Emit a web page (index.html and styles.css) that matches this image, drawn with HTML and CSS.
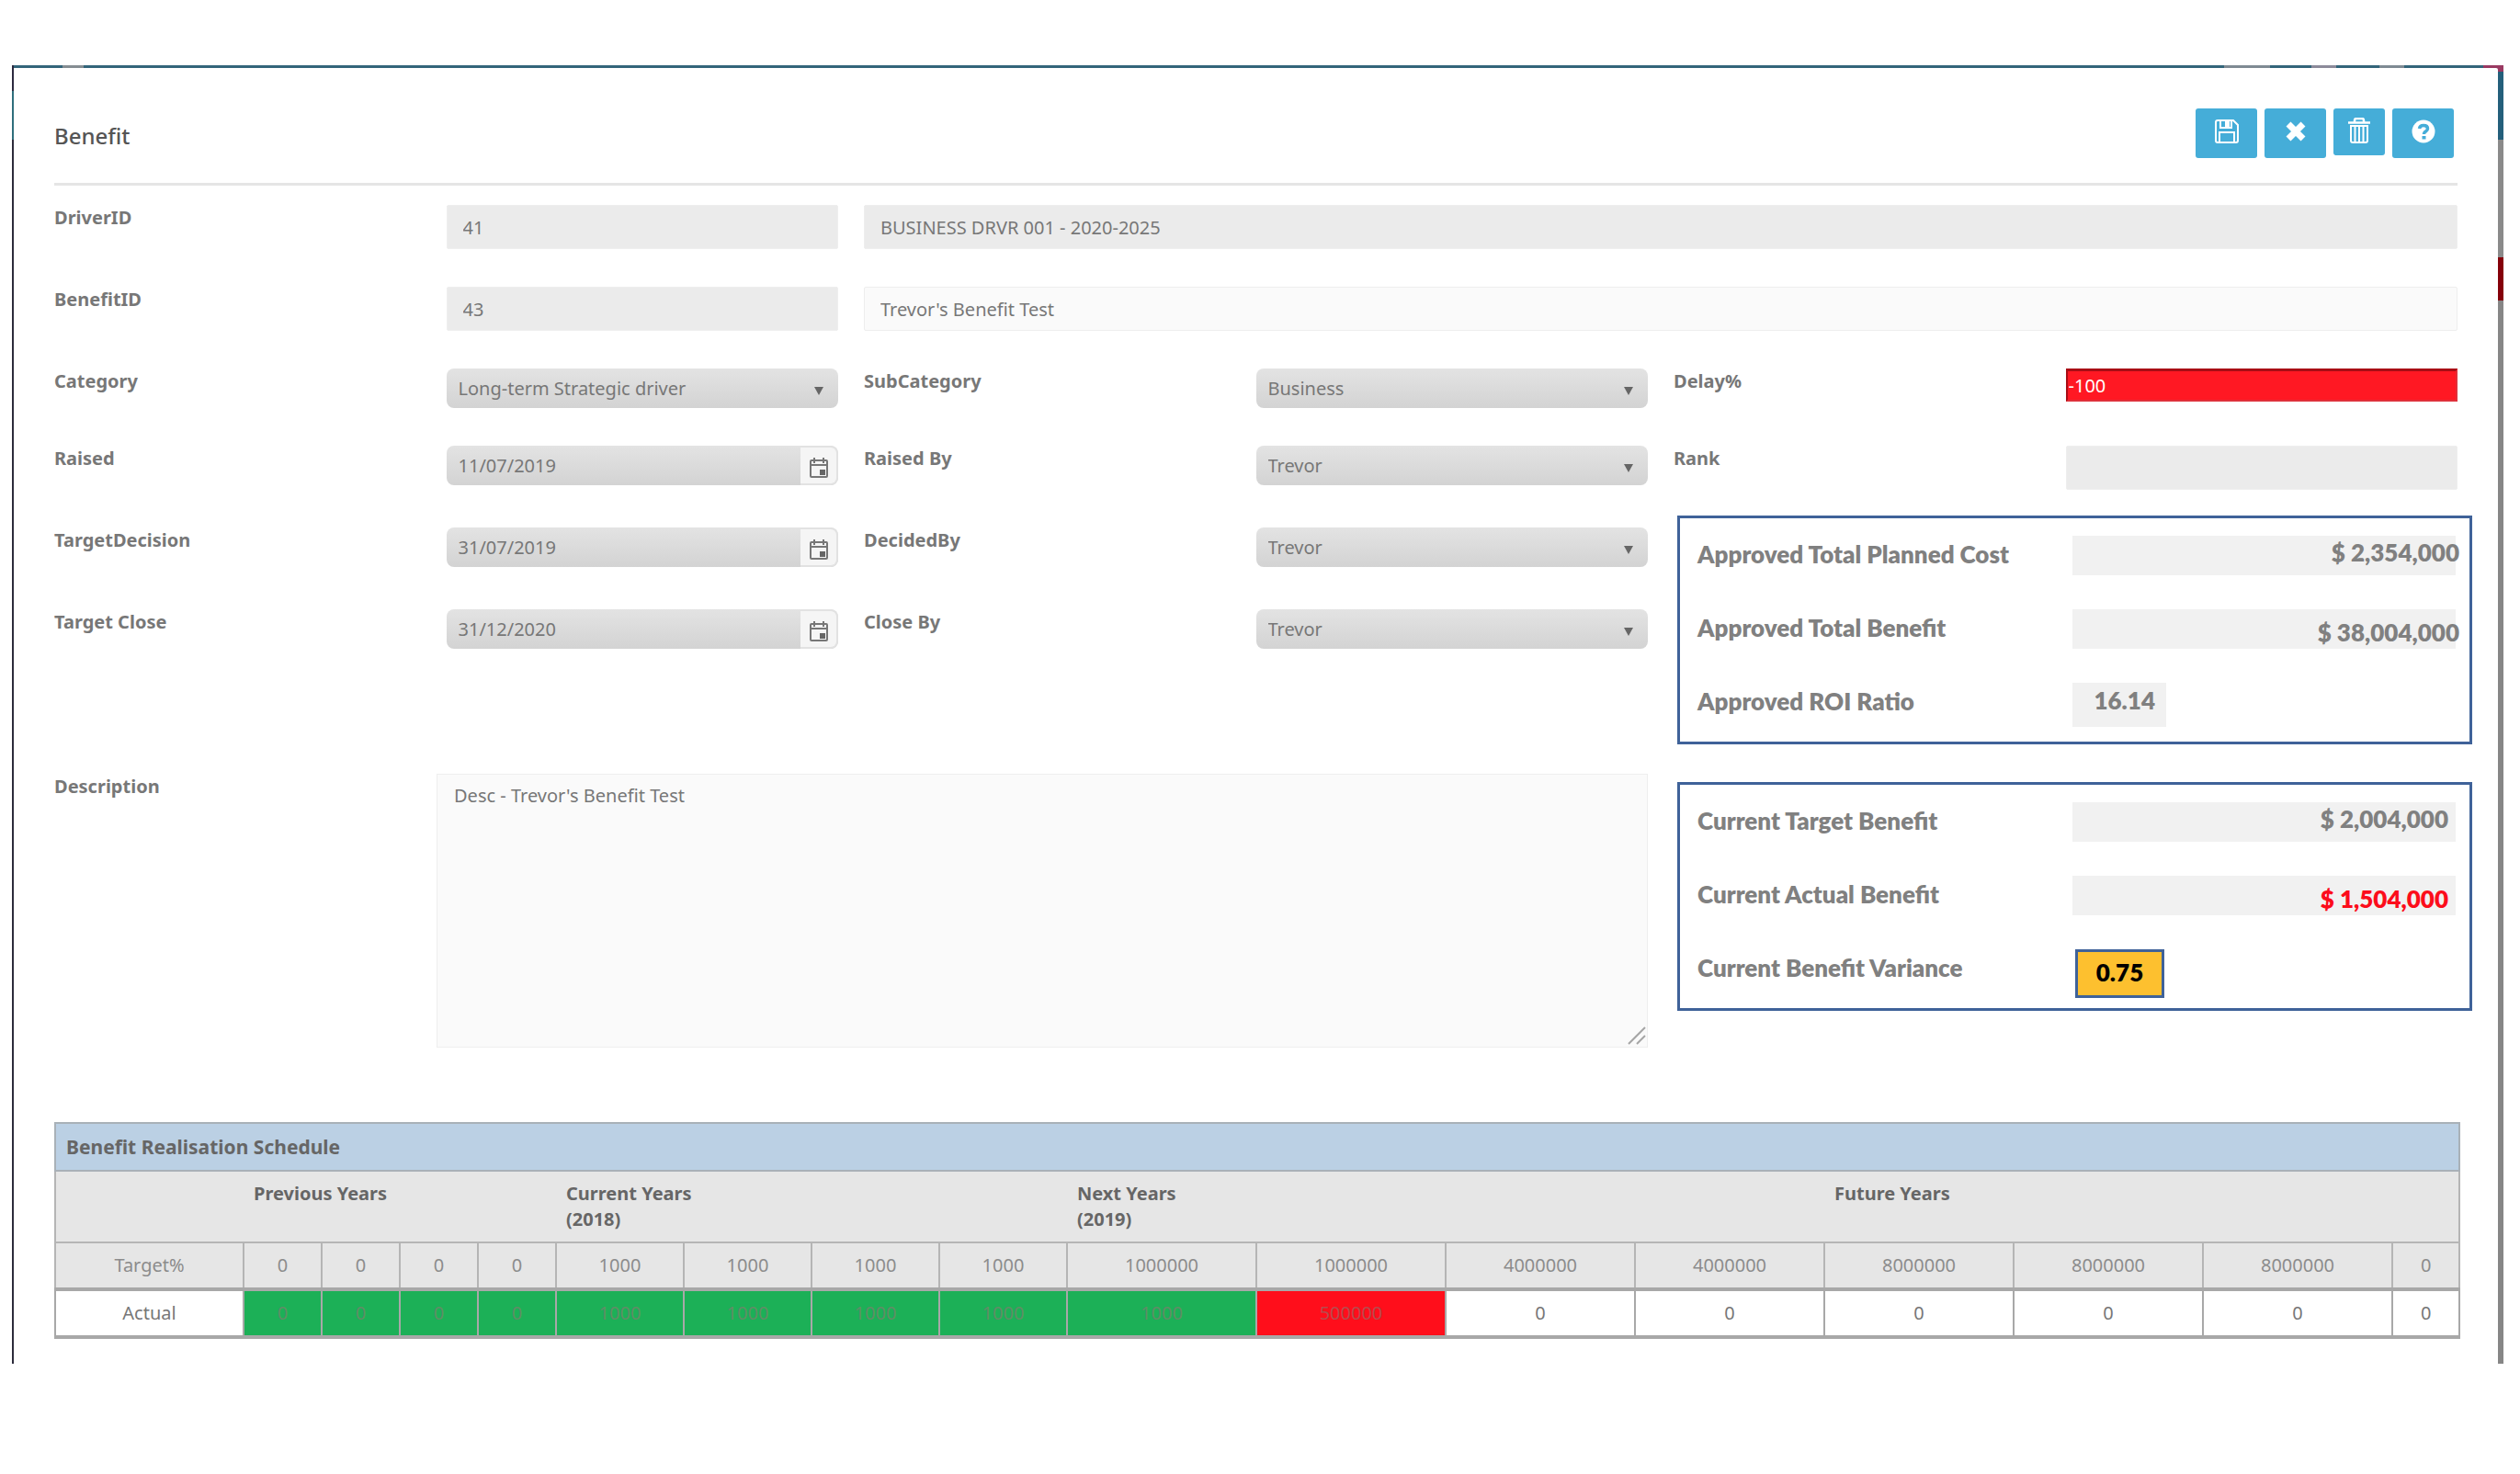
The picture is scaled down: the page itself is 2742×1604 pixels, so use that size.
FILE: index.html
```html
<!DOCTYPE html>
<html lang="en">

<head>
    <meta charset="UTF-8">
    <meta name="viewport" content="width=device-width, initial-scale=1.0">
    <title>Benefit</title>
    <link rel="stylesheet" href="styles.css">
</head>

<body>
    <div class="backdrop">
        <form class="modal">
            <div class="header">
                <h1>Benefit</h1>
                <div class="actions">
                    <button type="button" aria-label="Save">
                        <svg width="26" height="26" viewBox="0 0 26 26" fill="none" stroke="#fff" stroke-width="2">
                            <path d="M1 3Q1 1 3 1H20L25 6V23Q25 25 23 25H3Q1 25 1 23Z"/>
                            <path d="M5 25V14H21V25M6 1V9H18V1"/>
                            <rect x="12" y="2" width="3" height="5" fill="#fff"/>
                        </svg>
                    </button>
                    <button type="button" aria-label="Close">
                        <svg width="22" height="22" viewBox="0 0 22 22" fill="none" stroke="#fff" stroke-width="7">
                            <path d="M3 3L19 19M19 3L3 19"/>
                        </svg>
                    </button>
                    <button type="button" class="narrow" aria-label="Delete">
                        <svg width="24" height="28" viewBox="0 0 24 28" fill="none" stroke="#fff" stroke-width="2">
                            <path d="M0 5.500H24" stroke-width="2.500"/>
                            <path d="M7 5V3Q7 1 9 1H15Q17 1 17 3V5" stroke-width="2.500"/>
                            <path d="M3 9H21V25Q21 27 19 27H5Q3 27 3 25Z"/>
                            <path d="M7.500 10V26M12 10V26M16.500 10V26"/>
                        </svg>
                    </button>
                    <button type="button" aria-label="Help">
                        <svg width="26" height="26" viewBox="0 0 26 26" fill="none" stroke="#45add8">
                            <circle cx="13" cy="13" r="12.500" fill="#fff" stroke="none"/>
                            <path d="M8.500 10Q9 6.500 13 6.500Q17.500 6.500 17.500 10Q17.500 11.500 15.500 13Q13.500 14 13.500 16" stroke-width="3.500"/>
                            <path d="M13.500 18V21.500" stroke-width="4"/>
                        </svg>
                    </button>
                </div>
            </div>

            <div class="row">
                <div class="field">
                    <label for="driverId">DriverID</label>
                    <input class="text grey" id="driverId" value="41" readonly>
                </div>
                <input class="text grey wide" aria-label="Driver name" value="BUSINESS DRVR 001 - 2020-2025" readonly>
            </div>
            <div class="row">
                <div class="field">
                    <label for="benefitId">BenefitID</label>
                    <input class="text grey" id="benefitId" value="43" readonly>
                </div>
                <input class="text wide" aria-label="Benefit name" value="Trevor's Benefit Test">
            </div>

            <div class="main">
                <div class="left">
                    <div class="pair first">
                        <div class="field">
                            <label for="category">Category</label>
                            <div class="select"><select id="category"><option>Long-term Strategic driver</option></select></div>
                        </div>
                        <div class="field">
                            <label for="subCategory">SubCategory</label>
                            <div class="select"><select id="subCategory"><option>Business</option></select></div>
                        </div>
                    </div>
                    <div class="pair">
                        <div class="field">
                            <label for="raised">Raised</label>
                            <div class="date">
                                <input id="raised" value="11/07/2019">
                                <button type="button" aria-label="Pick raised date"><svg width="22" height="24" viewBox="0 0 22 24"><use href="#calendar"/></svg></button>
                            </div>
                        </div>
                        <div class="field">
                            <label for="raisedBy">Raised By</label>
                            <div class="select"><select id="raisedBy"><option>Trevor</option></select></div>
                        </div>
                    </div>
                    <div class="pair">
                        <div class="field">
                            <label for="targetDecision">TargetDecision</label>
                            <div class="date">
                                <input id="targetDecision" value="31/07/2019">
                                <button type="button" aria-label="Pick decision date"><svg width="22" height="24" viewBox="0 0 22 24"><use href="#calendar"/></svg></button>
                            </div>
                        </div>
                        <div class="field">
                            <label for="decidedBy">DecidedBy</label>
                            <div class="select"><select id="decidedBy"><option>Trevor</option></select></div>
                        </div>
                    </div>
                    <div class="pair last">
                        <div class="field">
                            <label for="targetClose">Target Close</label>
                            <div class="date">
                                <input id="targetClose" value="31/12/2020">
                                <button type="button" aria-label="Pick close date"><svg width="22" height="24" viewBox="0 0 22 24"><use href="#calendar"/></svg></button>
                            </div>
                        </div>
                        <div class="field">
                            <label for="closeBy">Close By</label>
                            <div class="select"><select id="closeBy"><option>Trevor</option></select></div>
                        </div>
                    </div>
                    <div class="description">
                        <label for="description">Description</label>
                        <div class="area">
                            <textarea id="description">Desc - Trevor's Benefit Test</textarea>
                            <svg class="grip" width="20" height="20" viewBox="0 0 20 20" fill="none" stroke="#a5a5a5" stroke-width="2"><path d="M1 19L19 1M10 19L19 10"/></svg>
                        </div>
                    </div>
                </div>

                <div class="right">
                    <div class="field first">
                        <label for="delay">Delay%</label>
                        <input class="delay" id="delay" value="-100">
                    </div>
                    <div class="field rank">
                        <label for="rank">Rank</label>
                        <input class="text grey" id="rank" readonly>
                    </div>
                    <div class="totals approved">
                        <label for="plannedCost">Approved Total Planned Cost</label>
                        <output class="amount upper" id="plannedCost"><span>$ 2,354,000</span></output>
                        <label for="totalBenefit">Approved Total Benefit</label>
                        <output class="amount lower" id="totalBenefit"><span>$ 38,004,000</span></output>
                        <label for="roi">Approved ROI Ratio</label>
                        <output class="amount ratio" id="roi">16.14</output>
                    </div>
                    <div class="totals current">
                        <label for="targetBenefit">Current Target Benefit</label>
                        <output class="amount upper" id="targetBenefit">$ 2,004,000</output>
                        <label for="actualBenefit">Current Actual Benefit</label>
                        <output class="amount lower under" id="actualBenefit">$ 1,504,000</output>
                        <label for="variance">Current Benefit Variance</label>
                        <output class="variance" id="variance">0.75</output>
                    </div>
                </div>
            </div>

            <table class="schedule">
                <colgroup>
                    <col class="name">
                    <col span="4" class="previous">
                    <col span="4" class="year">
                    <col span="7" class="future">
                    <col class="end">
                </colgroup>
                <thead>
                    <tr class="title">
                        <th colspan="17">Benefit Realisation Schedule</th>
                    </tr>
                    <tr class="years">
                        <th></th>
                        <th colspan="4">Previous Years</th>
                        <th colspan="4">Current Years<br>(2018)</th>
                        <th colspan="4">Next Years<br>(2019)</th>
                        <th colspan="4">Future Years</th>
                    </tr>
                </thead>
                <tbody>
                    <tr class="target">
                        <td>Target%</td>
                        <td>0</td>
                        <td>0</td>
                        <td>0</td>
                        <td>0</td>
                        <td>1000</td>
                        <td>1000</td>
                        <td>1000</td>
                        <td>1000</td>
                        <td>1000000</td>
                        <td>1000000</td>
                        <td>4000000</td>
                        <td>4000000</td>
                        <td>8000000</td>
                        <td>8000000</td>
                        <td>8000000</td>
                        <td>0</td>
                    </tr>
                    <tr class="actual">
                        <td>Actual</td>
                        <td class="met">0</td>
                        <td class="met">0</td>
                        <td class="met">0</td>
                        <td class="met">0</td>
                        <td class="met">1000</td>
                        <td class="met">1000</td>
                        <td class="met">1000</td>
                        <td class="met">1000</td>
                        <td class="met">1000</td>
                        <td class="missed">500000</td>
                        <td>0</td>
                        <td>0</td>
                        <td>0</td>
                        <td>0</td>
                        <td>0</td>
                        <td>0</td>
                    </tr>
                </tbody>
            </table>
        </form>
    </div>

    <svg class="symbols" width="0" height="0">
        <symbol id="calendar" viewBox="0 0 22 24">
            <rect x="2" y="4" width="18" height="18" rx="1" fill="none" stroke="#777" stroke-width="2"/>
            <path d="M2 9H20M6 1V7M16 1V7" stroke="#777" stroke-width="2"/>
            <rect x="12" y="14" width="6" height="6" fill="#666"/>
        </symbol>
    </svg>
</body>

</html>
```
FILE: styles.css
```css
* {
    box-sizing: border-box;
}

body {
    margin: 0;
    padding: 71px 18px 40px 13px;
    background-color: #fff;
    color: #777;
    font-family: 'Noto Sans', sans-serif;
    font-size: 20px;
    line-height: 28px;
}

input, select, textarea, button {
    font: inherit;
    color: inherit;
    margin: 0;
}

/* the page behind the dialog, only its edges can be seen */
.backdrop {
    padding: 3px 6px 0 2px;
    background:
        linear-gradient(#7f8a93, #7f8a93) right 254px top / 50px 3px no-repeat,
        linear-gradient(#8c8a9a, #8c8a9a) right 182px top / 27px 3px no-repeat,
        linear-gradient(#7f8a93, #7f8a93) right 108px top / 27px 3px no-repeat,
        linear-gradient(#9a3a62, #9a3a62) right top / 22px 7px no-repeat,
        linear-gradient(#858d92, #858d92) 55px 0 / 23px 3px no-repeat,
        linear-gradient(#33657a, #33657a) 2px 0 / 100% 3px no-repeat,
        linear-gradient(#245f7b 81px, #8a8a8a 81px, #8a8a8a 209px, #85000a 209px, #85000a 256px, #868686 256px) right top / 6px 100% no-repeat,
        linear-gradient(#2c2a40 28px, #2f6e7c 28px, #2f6e7c 81px, #2c2b3b 81px) left top / 2px 100% no-repeat;
}

.modal {
    padding: 0 44px 27px;
    background-color: #fff;
    border-radius: 2px;
}

.header {
    display: flex;
    justify-content: space-between;
    align-items: flex-start;
    height: 128px;
    padding: 44px 4px 0 0;
    margin-bottom: 21px;
    border-bottom: 3px solid #e5e5e5;
}

h1 {
    margin: 14px 0 0;
    color: #555;
    font-size: 24px;
    font-weight: 500;
    line-height: 32px;
}

.actions {
    display: flex;
    align-items: flex-start;
    gap: 8px;
}

.actions button {
    display: flex;
    justify-content: center;
    align-items: center;
    width: 67px;
    height: 54px;
    padding: 0 0 4px;
    background-color: #45add8;
    border: none;
    border-radius: 3px;
    cursor: pointer;
}

.actions .narrow {
    width: 56px;
    height: 51px;
}

label {
    font-weight: 700;
}

.row {
    display: grid;
    grid-template-columns: repeat(3, 1fr);
    column-gap: 28px;
    min-height: 89px;
    align-items: start;
}

.wide {
    grid-column: span 2;
}

.field {
    display: grid;
    grid-template-columns: 1fr 1fr;
    align-items: start;
}

.text {
    width: 100%;
    height: 48px;
    padding: 0 17px;
    background-color: #fafafa;
    border: 1px solid #eee;
    border-radius: 2px;
}

.grey {
    background-color: #ebebeb;
}

.main {
    display: grid;
    grid-template-columns: repeat(3, 1fr);
    column-gap: 28px;
    margin-bottom: 81px;
}

.left {
    grid-column: span 2;
}

.pair {
    display: grid;
    grid-template-columns: 1fr 1fr;
    column-gap: 28px;
    min-height: 89px;
    align-items: start;
}

.pair.first, .right .first {
    min-height: 84px;
}

.pair.last {
    min-height: 179px;
}

.select {
    position: relative;
}

.select select {
    display: block;
    width: 100%;
    height: 43px;
    padding: 0 40px 0 13px;
    appearance: none;
    background: linear-gradient(#e3e3e3, #d3d3d3);
    border: none;
    border-radius: 8px;
}

.select::after {
    content: "";
    position: absolute;
    right: 16px;
    top: 20px;
    border: 5px solid transparent;
    border-top: 9px solid #666;
    border-bottom: none;
    pointer-events: none;
}

.date {
    display: flex;
    height: 43px;
    background: linear-gradient(#e3e3e3, #d3d3d3);
    border-radius: 8px;
    overflow: hidden;
}

.date input {
    flex: 1;
    min-width: 0;
    padding: 0 13px;
    background: none;
    border: none;
}

.date button {
    display: flex;
    justify-content: center;
    align-items: center;
    width: 41px;
    padding: 4px 0 0;
    background-color: #f5f5f5;
    border: 2px solid #e2e2e2;
    border-left: none;
    border-radius: 0 8px 8px 0;
}

.description {
    display: grid;
    grid-template-columns: 416px 1fr;
    align-items: start;
}

.area {
    position: relative;
}

textarea {
    display: block;
    width: 100%;
    height: 298px;
    padding: 9px 18px;
    background-color: #fafafa;
    border: 1px solid #eee;
    resize: none;
}

.grip {
    position: absolute;
    right: 2px;
    bottom: 3px;
}

.delay {
    width: 100%;
    height: 36px;
    padding: 0 1px;
    background-color: #ff1823;
    border: 2px solid #e0303a;
    border-top: 3px solid #a80d15;
    border-left-color: #a80d15;
    color: #fff;
}

.rank {
    min-height: 76px;
}

.totals {
    display: grid;
    grid-template-columns: 408px 1fr;
    row-gap: 37px;
    align-items: start;
    align-content: start;
    min-height: 249px;
    margin: 0 -16px 41px 4px;
    padding: 19px 15px 0 19px;
    border: 3px solid #3f6299;
    color: #808080;
    font-family: Lato, sans-serif;
    font-size: 26px;
    font-weight: 800;
    line-height: 32px;
}

.current {
    margin-bottom: 0;
}

.totals label {
    padding-top: 4px;
    font-weight: inherit;
}

.amount {
    height: 43px;
    background-color: #f1f1f1;
    text-align: right;
}

.upper {
    padding-top: 2px;
}

.lower {
    padding-top: 9px;
}

.approved span {
    margin-right: -4px;
}

.current .amount {
    padding-right: 8px;
}

.ratio {
    width: 102px;
    height: 48px;
    padding: 3px 12px 0;
}

.under {
    color: #fc0d1b;
}

.variance {
    width: 97px;
    height: 53px;
    margin-left: 3px;
    padding-top: 6px;
    background-color: #fdc02f;
    border: 3px solid #3f6299;
    color: #000;
    text-align: center;
}

.schedule {
    width: 100%;
    table-layout: fixed;
    border-collapse: collapse;
}

.name {
    width: 205px;
}

.previous {
    width: 85px;
}

.year {
    width: 139px;
}

.future {
    width: 206px;
}

.end {
    width: 73px;
}

th {
    padding: 0 11px;
    color: #666;
    text-align: left;
    vertical-align: top;
}

.title th {
    height: 52px;
    background-color: #bbd0e4;
    border: 2px solid #a9b1b8;
    font-size: 21px;
    vertical-align: middle;
}

.years {
    background-color: #e6e6e6;
    border: 2px solid #b5b5b5;
}

.years th {
    height: 78px;
    padding-top: 10px;
}

td {
    padding: 0;
    text-align: center;
}

.target td {
    height: 51px;
    background-color: #e6e6e6;
    border: 2px solid #b5b5b5;
    color: #8c8c8c;
}

.actual td {
    height: 52px;
    border: 2px solid #a8a8a8;
    border-width: 4px 2px;
}

.actual .met {
    background-color: #1cb057;
    color: #5f8d66;
}

.actual .missed {
    background-color: #ff0e1b;
    color: #b84a4c;
}

.symbols {
    position: absolute;
}
```
